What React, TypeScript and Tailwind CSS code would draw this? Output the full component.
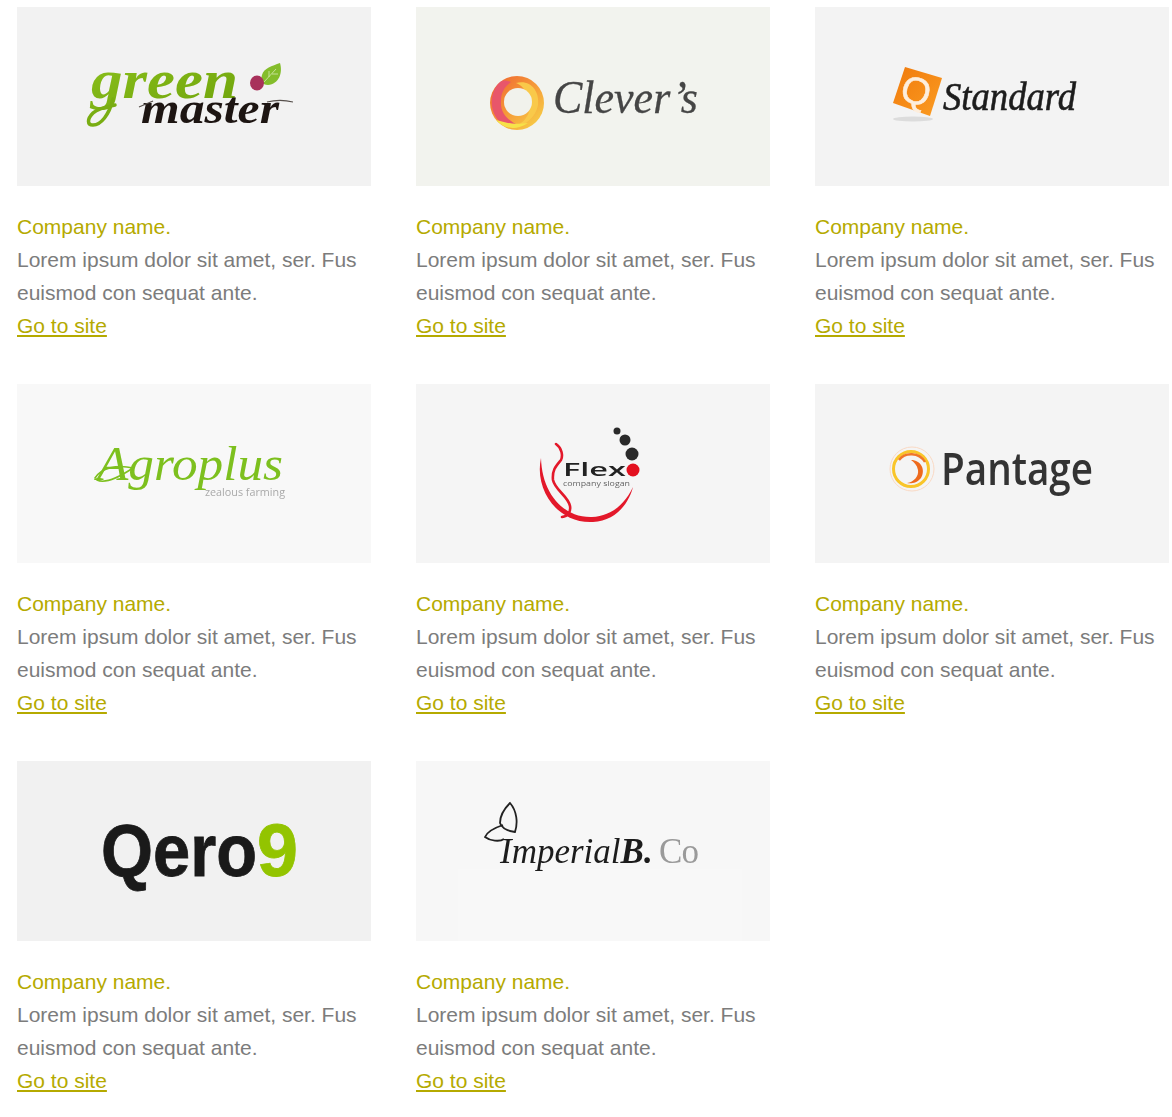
import type { ReactNode } from "react";

const serif = "font-['Liberation_Serif',serif]";
const sans = "font-['Liberation_Sans',sans-serif]";
const open = "font-['Open_Sans',sans-serif]";

function GreenMaster() {
  return (
    <svg viewBox="0 0 354 179" className="h-full w-full blur-[0.5px]">
      <defs>
        <linearGradient id="gm" x1="0" y1="0" x2="1" y2="1">
          <stop offset="0" stopColor="#8cc21c" />
          <stop offset="1" stopColor="#6fa30c" />
        </linearGradient>
      </defs>
      <text x="74" y="91" fontSize="54" fontStyle="italic" fontWeight="700" textLength="147" lengthAdjust="spacingAndGlyphs" fill="url(#gm)" className={serif}>green</text>
      <path d="M96 92C92 108 84 118 76 118C70 118 70 112 76 106C80 102 88 100 98 98" fill="none" stroke="#79ad12" strokeWidth="3.5" strokeLinecap="round" />
      <text x="124" y="116" fontSize="44" fontStyle="italic" fontWeight="700" textLength="138" lengthAdjust="spacingAndGlyphs" fill="#1d1512" className={serif}>master</text>
      <path d="M122 100L136 94M250 95C258 93 268 93 276 95" fill="none" stroke="#57504c" strokeWidth="1.2" />
      <path d="M263 56C266 66 262 77 251 78C245 78 243 74 245 68C247 61 255 59 263 56Z" fill="#84bd2b" />
      <path d="M247 75L259 62M252 70L252 64M255 67L261 67" stroke="#d5e9b0" strokeWidth="0.8" fill="none" />
      <ellipse cx="240" cy="76" rx="7" ry="7.5" fill="#a8315b" />
    </svg>
  );
}

function Clevers() {
  return (
    <svg viewBox="0 0 354 179" className="h-full w-full blur-[0.5px]">
      <defs>
        <linearGradient id="cl" x1="0" y1="0" x2="1" y2="1">
          <stop offset="0" stopColor="#ee5f2f" />
          <stop offset="0.55" stopColor="#f6a03a" />
          <stop offset="1" stopColor="#f7d84a" />
        </linearGradient>
      </defs>
      <circle cx="101" cy="96" r="27" fill="url(#cl)" />
      <path d="M84 75C74 84 72 104 84 115C86 118 93 118 100 117C90 112 84 104 85 94C85 86 88 80 95 75C91 73 87 73 84 75Z" fill="#e8566a" />
      <path d="M100 76C114 72 124 84 122 98C120 110 108 121 94 121C104 120 118 108 113 92C110 84 106 78 100 76Z" fill="#f9c94a" />
      <path d="M80 113C88 122 100 124 112 116C100 118 90 116 80 113Z" fill="#f6e24a" />
      <circle cx="102" cy="95" r="14" fill="#f1f2ec" />
      <text x="137" y="106" fontSize="46" fontStyle="italic" textLength="145" lengthAdjust="spacingAndGlyphs" fill="#454545" stroke="#454545" strokeWidth="0.3" className={serif}>Clever’s</text>
    </svg>
  );
}

function Standard() {
  return (
    <svg viewBox="0 0 354 179" className="h-full w-full blur-[0.5px]">
      <defs>
        <linearGradient id="st" x1="0" y1="0" x2="1" y2="1">
          <stop offset="0" stopColor="#f07a0c" />
          <stop offset="1" stopColor="#fb9c22" />
        </linearGradient>
      </defs>
      <ellipse cx="98" cy="112" rx="20" ry="2.5" fill="#dcdcdc" />
      <path d="M90 60L127 71L115 109L78 96Z" fill="url(#st)" />
      <text x="101" y="97" fontSize="38" textAnchor="middle" fill="#fdeedd" stroke="#fdeedd" strokeWidth="0.5" transform="rotate(15 101 85)" className={sans}>Q</text>
      <text x="128" y="103" fontSize="40" fontStyle="italic" textLength="133" lengthAdjust="spacingAndGlyphs" fill="#1c1c1c" stroke="#1c1c1c" strokeWidth="0.6" className={serif}>Standard</text>
    </svg>
  );
}

function Agroplus() {
  return (
    <svg viewBox="0 0 354 179" className="h-full w-full blur-[0.4px]">
      <text x="80" y="96" fontSize="48" fontStyle="italic" textLength="186" lengthAdjust="spacingAndGlyphs" fill="#7dc01e" className={serif}>Agroplus</text>
      <path d="M78 94C84 84 100 80 116 84C104 92 88 100 80 96" fill="none" stroke="#7dc01e" strokeWidth="1.6" strokeLinecap="round" />
      <text x="188" y="112" fontSize="11.5" textLength="80" lengthAdjust="spacingAndGlyphs" fill="#a9a9a9" className={open}>zealous farming</text>
    </svg>
  );
}

function Flex() {
  return (
    <svg viewBox="0 0 354 179" className="h-full w-full blur-[0.5px]">
      <circle cx="201" cy="47" r="3.5" fill="#2a2a2a" />
      <circle cx="209" cy="56" r="5.5" fill="#2a2a2a" />
      <circle cx="216" cy="70" r="6.5" fill="#2a2a2a" />
      <circle cx="217" cy="86" r="6.5" fill="#e3101f" />
      <path d="M125 74C118 106 142 140 177 138C198 137 212 122 217 103C208 122 194 132 176 133C148 134 126 110 125 74Z" fill="#e3182a" />
      <path d="M140 60C146 64 147 72 145 76C140 82 136 86 137 96C139 106 152 112 154 122C155 128 152 132 146 133" fill="none" stroke="#e3182a" strokeWidth="2.6" strokeLinecap="round" />
      <text x="147" y="92" fontSize="18" fontWeight="600" textLength="63" lengthAdjust="spacingAndGlyphs" fill="#222" className={open}>Flex</text>
      <text x="147" y="102" fontSize="8" textLength="67" lengthAdjust="spacingAndGlyphs" fill="#666" className={open}>company slogan</text>
    </svg>
  );
}

function Pantage() {
  return (
    <svg viewBox="0 0 354 179" className="h-full w-full blur-[0.5px]">
      <circle cx="97" cy="85" r="22" fill="none" stroke="#f9d9c4" strokeWidth="1" />
      <circle cx="96" cy="85" r="17.5" fill="none" stroke="#f9c52a" strokeWidth="3" />
      <path d="M84 76C90 68 104 68 110 78" fill="none" stroke="#f0762a" strokeWidth="2.4" />
      <path d="M96 76C106 76 111 86 106 94C102 99 96 100 92 99C99 98 104 92 103 86C102 81 99 78 96 76Z" fill="#ee6a1d" />
      <text x="126" y="101" fontSize="45" fontWeight="600" textLength="152" lengthAdjust="spacingAndGlyphs" fill="#333" className={open}>Pantage</text>
    </svg>
  );
}

function Qero() {
  return (
    <svg viewBox="0 0 354 180" className="h-full w-full blur-[0.5px]">
      <text x="84" y="115" fontSize="74" fontWeight="700" textLength="156" lengthAdjust="spacingAndGlyphs" fill="#1a1a1a" stroke="#1a1a1a" strokeWidth="0.8" className={sans}>Qero</text>
      <text x="240" y="115" fontSize="74" fontWeight="700" textLength="41" lengthAdjust="spacingAndGlyphs" fill="#93c400" stroke="#93c400" strokeWidth="0.8" className={sans}>9</text>
    </svg>
  );
}

function Imperial() {
  return (
    <svg viewBox="0 0 354 180" className="h-full w-full blur-[0.4px]">
      <rect x="42" y="108" width="284" height="72" fill="#f8f8f8" />
      <path d="M94 42C101 50 102 62 99 71C92 70 86 68 84 62C84 55 88 48 94 42ZM87 64C78 67 71 71 69 76C74 80 84 81 88 78" fill="none" stroke="#222" strokeWidth="1.8" />
      <text x="84" y="102" fontSize="35" fontStyle="italic" fill="#1c1c1c" className={serif}>Imperial<tspan fontWeight="700">B.</tspan></text>
      <text x="243" y="102" fontSize="35" textLength="40" fill="#9a9a9a" className={serif}>Co</text>
    </svg>
  );
}

type Card = { bg: string; tall?: boolean; logo: ReactNode };

const cards: Card[] = [
  { bg: "bg-[#f2f2f2]", logo: <GreenMaster /> },
  { bg: "bg-[#f2f3ee]", logo: <Clevers /> },
  { bg: "bg-[#f3f3f3]", logo: <Standard /> },
  { bg: "bg-[#f8f8f8]", logo: <Agroplus /> },
  { bg: "bg-[#f5f5f5]", logo: <Flex /> },
  { bg: "bg-[#f4f4f4]", logo: <Pantage /> },
  { bg: "bg-[#f1f1f1]", tall: true, logo: <Qero /> },
  { bg: "bg-[#f7f7f7]", tall: true, logo: <Imperial /> },
];

export default function App() {
  return (
    <div className="min-h-[1117px] bg-white pl-[17px] pt-[7px] font-['Liberation_Sans',Arial,sans-serif] text-[21px] leading-[33px]">
      <div className="grid grid-cols-[354px_354px_354px] gap-x-[45px] gap-y-[42px]">
        {cards.map((card, idx) => (
          <div key={idx}>
            <div className={`${card.tall ? "h-[180px]" : "h-[179px]"} ${card.bg}`}>{card.logo}</div>
            <div className="mt-[24px]">
              <p className="text-[#b5aa00]">Company name.</p>
              <p className="text-[#7c7c7c]">Lorem ipsum dolor sit amet, ser. Fus euismod con sequat ante.</p>
              <a href="#" className="text-[#b5aa00] underline decoration-2 underline-offset-[2px]">Go to site</a>
            </div>
          </div>
        ))}
      </div>
    </div>
  );
}
